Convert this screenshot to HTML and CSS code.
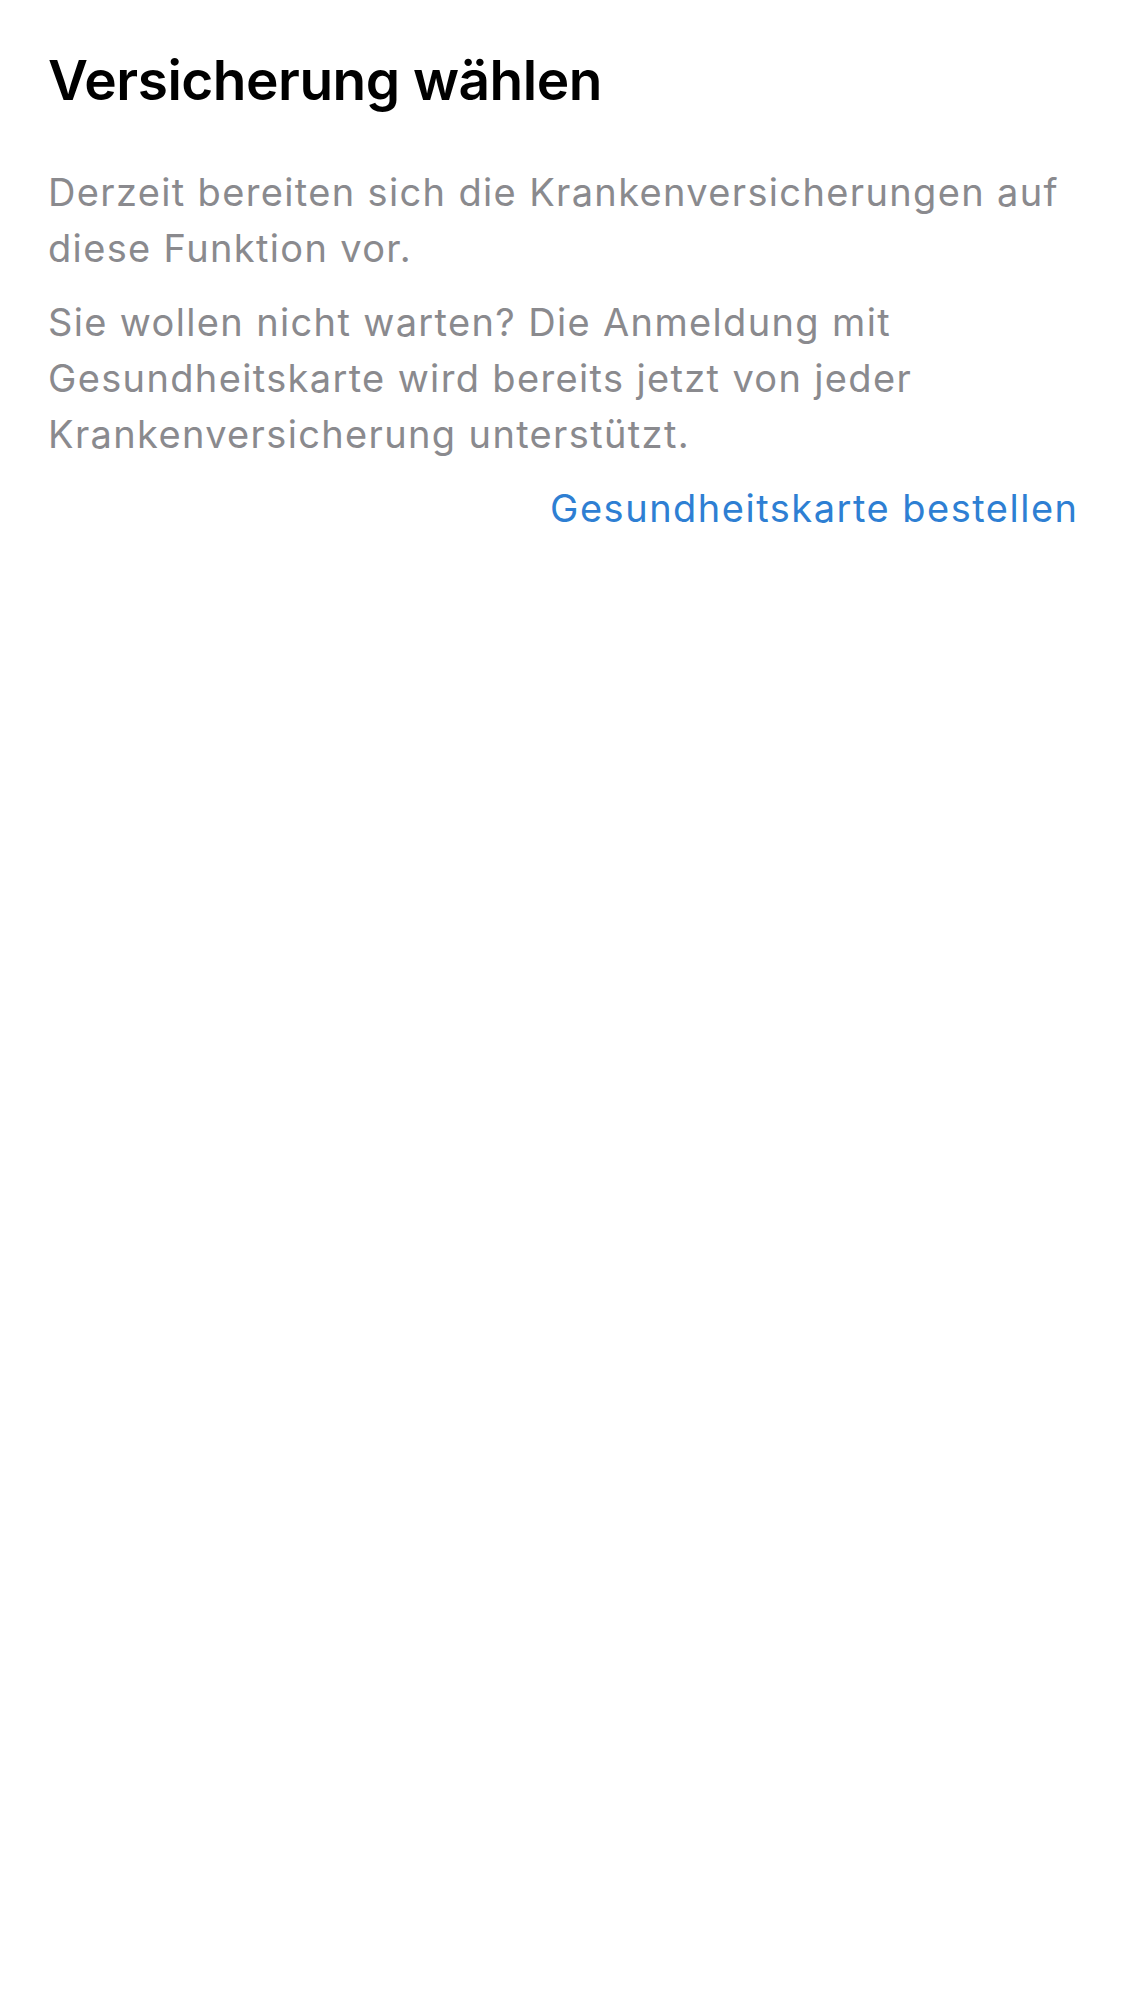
FILE: index.html
```html
<!DOCTYPE html>
<html lang="de">
<head>
<meta charset="utf-8">
<title>Versicherung wählen</title>
<link rel="stylesheet" href="styles.css">
</head>
<body>
<main class="screen">
  <h1 class="title">Versicherung wählen</h1>
  <p class="text">Derzeit bereiten sich die Krankenversicherungen auf diese Funktion vor.</p>
  <p class="text">Sie wollen nicht warten? Die Anmeldung mit Gesundheitskarte wird bereits jetzt von jeder Krankenversicherung unterstützt.</p>
  <div class="actions"><a class="link" href="#">Gesundheitskarte bestellen</a></div>
</main>
</body>
</html>
```

FILE: styles.css
```css
html, body {
  margin: 0;
  padding: 0;
  background: #ffffff;
}
body {
  font-family: Inter, "Noto Sans", "Liberation Sans", sans-serif;
  width: 1125px;
  height: 2001px;
}
.screen {
  padding: 44px 48px 0 48px;
  display: flex;
  flex-direction: column;
}
.title {
  margin: 0 0 48px 0;
  font-size: 55px;
  line-height: 72px;
  font-weight: 600;
  color: #000000;
  letter-spacing: -0.5px;
}
.text {
  margin: 0 0 18px 0;
  font-size: 38px;
  line-height: 56px;
  font-weight: 400;
  color: #8a8a8e;
  letter-spacing: 1.35px;
}
.actions {
  display: flex;
  justify-content: flex-end;
}
.link {
  font-size: 38px;
  line-height: 56px;
  color: #2e7fd3;
  text-decoration: none;
  letter-spacing: 1.5px;
  margin-right: -1.5px;
}
```
